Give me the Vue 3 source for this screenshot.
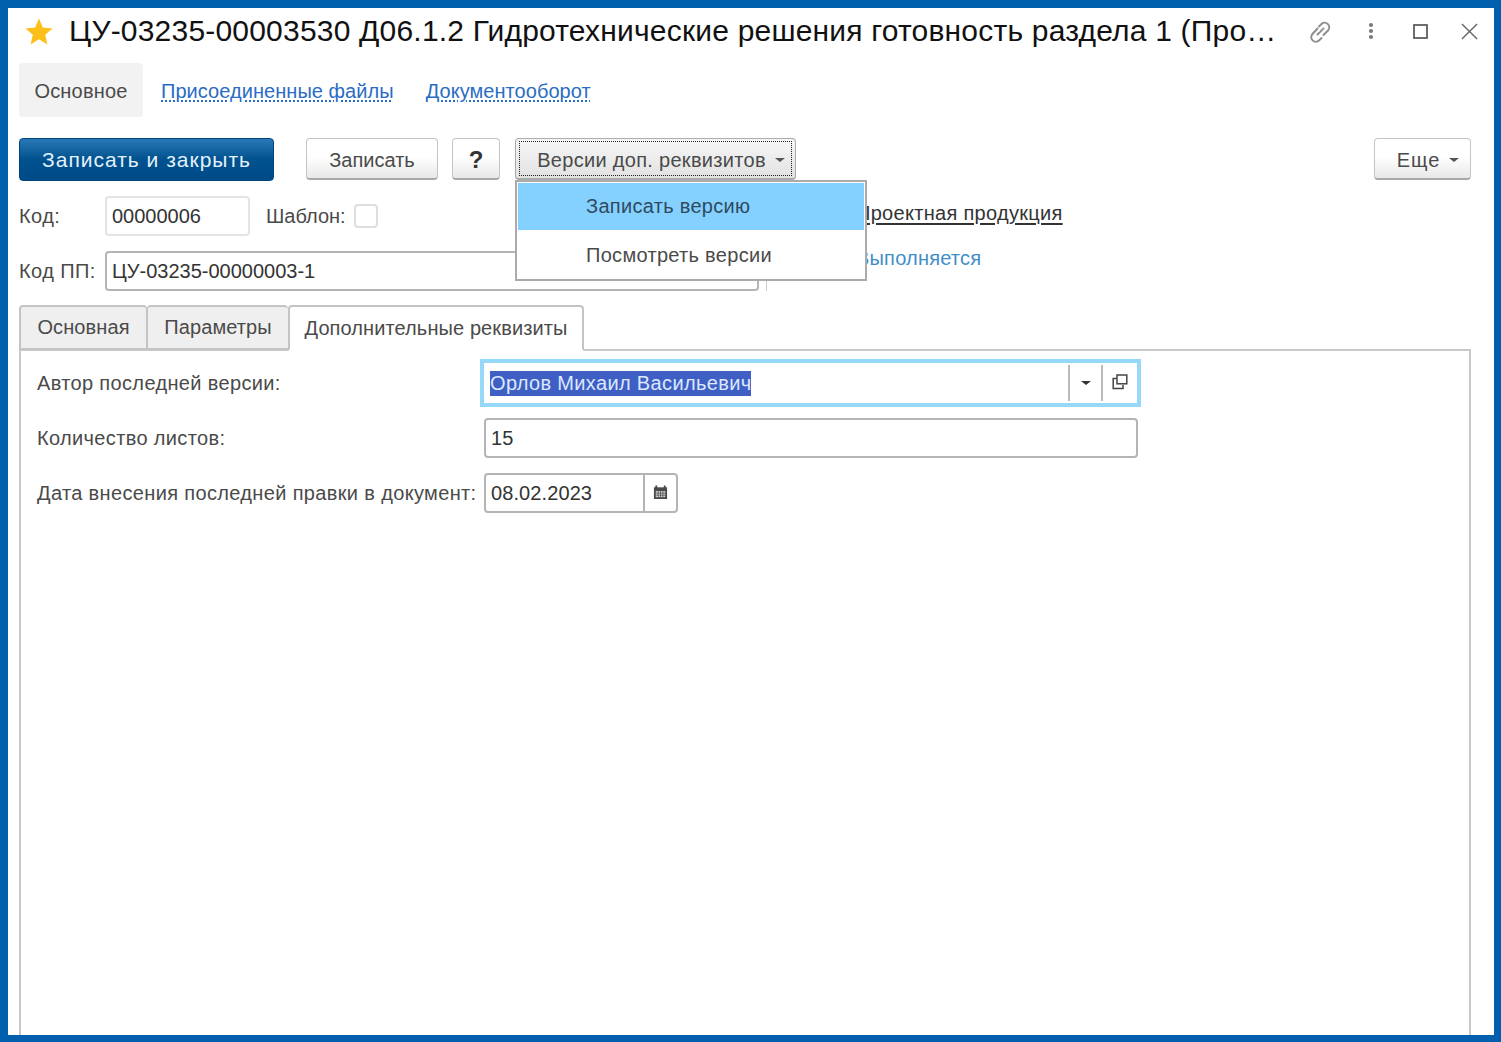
<script setup>
const tabs = [
  { label: 'Основная', cls: 'tab-one' },
  { label: 'Параметры', cls: 'tab-two' },
  { label: 'Дополнительные реквизиты', cls: 'tab-three active' }
]
</script>

<template>
  <div class="frame">
    <div class="window">
      <header class="titlebar">
        <svg class="star" viewBox="0 0 28 27"><path d="M14 0.5l3.9 9.1 9.6.8-7.3 6.4 2.2 9.6L14 21.3l-8.4 5.1 2.2-9.6L.5 10.4l9.6-.8z" fill="#fdbf1c"/></svg>
        <h1 class="title">ЦУ-03235-00003530 Д06.1.2 Гидротехнические решения готовность раздела 1 (Про…</h1>
        <div class="winbtns">
          <svg class="ic-link" viewBox="0 0 25 25" fill="none" stroke="#8e8e8e" stroke-width="2" stroke-linecap="round"><path d="M11 7.5L13.5 5a4.6 4.6 0 0 1 6.5 6.5L15.5 16"/><path d="M9.5 9.5L4.5 15a4.6 4.6 0 0 0 6.5 6.5l2.5-2.5"/><path d="M9.5 15.5l6-6" stroke-dasharray="2.5 1.5"/></svg>
          <svg class="ic-kebab" viewBox="0 0 6 18" fill="#7a7a7a"><circle cx="3" cy="3" r="2.1"/><circle cx="3" cy="9" r="2.1"/><circle cx="3" cy="15" r="2.1"/></svg>
          <svg class="ic-max" viewBox="0 0 15 15" fill="none" stroke="#555" stroke-width="1.7"><rect x="1" y="1" width="13" height="13"/></svg>
          <svg class="ic-close" viewBox="0 0 18 18" fill="none" stroke="#666" stroke-width="1.5"><path d="M1 1l16 16M17 1L1 17"/></svg>
        </div>
      </header>

      <nav class="nav">
        <span class="nav-current">Основное</span>
        <a class="nav-link">Присоединенные файлы</a>
        <a class="nav-link">Документооборот</a>
      </nav>

      <div class="toolbar">
        <button class="btn primary">Записать и закрыть</button>
        <button class="btn save">Записать</button>
        <button class="btn help">?</button>
        <div class="menu-wrap">
          <button class="btn versions">
            <span class="focus-ring">Версии доп. реквизитов<i class="caret"></i></span>
          </button>
          <ul class="popup">
            <li class="popup-item hot">Записать версию</li>
            <li class="popup-item">Посмотреть версии</li>
          </ul>
        </div>
        <button class="btn more">Еще<i class="caret"></i></button>
      </div>

      <div class="row row-code">
        <label class="lbl lbl-code">Код:</label>
        <div class="field field-code">00000006</div>
        <label class="lbl lbl-tpl">Шаблон:</label>
        <span class="check"></span>
        <a class="product">Проектная продукция</a>
      </div>

      <div class="row row-pp">
        <label class="lbl lbl-code">Код ПП:</label>
        <div class="field field-pp">ЦУ-03235-00000003-1</div>
        <span class="tick"></span>
        <a class="status">Выполняется</a>
      </div>

      <div class="tabs">
        <div v-for="t in tabs" :key="t.label" class="tab" :class="t.cls">{{ t.label }}</div>
      </div>

      <section class="panel">
        <div class="p-row p-author">
          <label class="lbl">Автор последней версии:</label>
          <div class="field focused">
            <span class="sel">Орлов Михаил Васильевич</span>
            <span class="f-btn f-drop"><i class="caret dark"></i></span>
            <span class="f-btn f-open">
              <svg viewBox="0 0 16 16" fill="none" stroke="#444" stroke-width="1.5"><path d="M4.5 4.5H1.2v10h9.8v-3.4"/><rect x="5" y="1" width="9.8" height="8.8" fill="#fff"/></svg>
            </span>
          </div>
        </div>
        <div class="p-row p-count">
          <label class="lbl">Количество листов:</label>
          <div class="field field-wide">15</div>
        </div>
        <div class="p-row p-date">
          <label class="lbl">Дата внесения последней правки в документ:</label>
          <div class="field field-date">
            <span class="date-text">08.02.2023</span>
            <span class="f-cal">
              <svg viewBox="0 0 16 16"><path d="M1 3h14v12.5H1z" fill="#4a4a4a"/><path d="M3.5 1v3M12.5 1v3" stroke="#4a4a4a" stroke-width="2"/><path d="M3 7h10v6.5H3z" fill="#d8d8d8"/><path d="M3 9.2h10M3 11.4h10M5.5 7v6.5M8 7v6.5M10.5 7v6.5" stroke="#4a4a4a" stroke-width=".8"/></svg>
            </span>
          </div>
        </div>
      </section>
    </div>
  </div>
</template>

<style>
html, body { margin: 0; padding: 0; }
</style>

<style scoped>
* { box-sizing: border-box; }
.frame {
  width: 1501px;
  height: 1042px;
  padding: 8px 7px 7px 8px;
  background: #0060ae;
  overflow: hidden;
  font-family: "Liberation Sans", Arial, sans-serif;
  font-size: 20px;
  color: #4a4a4a;
}
.window {
  height: 100%;
  background: #fff;
  display: flex;
  flex-direction: column;
  padding: 0 23px 0 11px;
}

.titlebar {
  height: 55px;
  margin-right: -12px;
  padding-bottom: 9px;
  display: flex;
  align-items: center;
  flex: none;
}
.star { width: 28px; height: 27px; margin: 0 0 0 6px; flex: none; }
.title {
  margin: 0 0 0 16px;
  font-size: 30px;
  font-weight: 400;
  letter-spacing: .2px;
  color: #111;
  white-space: nowrap;
  width: 1210px;
  flex: none;
  overflow: hidden;
}
.winbtns { display: flex; align-items: center; margin-left: 29px; flex: none; }
.ic-link { width: 25px; height: 25px; }
.ic-kebab { width: 6px; height: 18px; margin-left: 35px; }
.ic-max { width: 15px; height: 15px; margin-left: 39px; }
.ic-close { width: 17px; height: 17px; margin-left: 33px; }

.nav { display: flex; align-items: center; height: 54px; flex: none; }
.nav-current {
  width: 124px;
  height: 54px;
  padding-top: 2px;
  letter-spacing: .2px;
  background: #f2f2f2;
  border-radius: 4px;
  display: flex;
  align-items: center;
  justify-content: center;
}
.nav-link {
  color: #2b6cc4;
  margin: 2px 0 0 18px;
  letter-spacing: .05px;
  text-decoration: underline dotted;
  text-underline-offset: 3px;
}
.nav-link + .nav-link { margin-left: 32px; }

.toolbar { display: flex; align-items: flex-start; margin-top: 21px; height: 43px; flex: none; }
.btn {
  font: inherit;
  height: 42px;
  padding: 3px 0 0;
  color: #4a4a4a;
  border: 1px solid #c4c4c4;
  border-bottom: 2px solid #a8a8a8;
  border-radius: 4px;
  background: linear-gradient(#fff 45%, #e8e8e8);
}
.primary {
  width: 255px;
  height: 43px;
  padding-top: 1px;
  color: #e4f1fb;
  font-size: 21px;
  letter-spacing: 1px;
  border: 1px solid #00447e;
  background: linear-gradient(#2a78b6, #00528f 50%, #004a88);
}
.save { width: 132px; margin-left: 32px; }
.help { width: 48px; margin-left: 14px; color: #333; font-size: 24px; font-weight: 700; }
.menu-wrap { position: relative; margin-left: 15px; }
.versions { width: 281px; background: linear-gradient(#f6f6f6, #e2e2e2); padding: 2px 3px; border-width: 1px 1px 2px; border-color: #aaa; }
.focus-ring {
  display: flex;
  align-items: center;
  justify-content: center;
  height: 100%;
  padding: 3px 0 0 11px;
  border: 1px dotted #222;
  letter-spacing: .3px;
}
.caret {
  display: inline-block;
  width: 0;
  height: 0;
  margin-left: 9px;
  border-left: 5px solid transparent;
  border-right: 5px solid transparent;
  border-top: 4px solid #555;
}
.caret.dark { margin: 0; border-top-color: #333; }
.popup {
  position: absolute;
  left: 0;
  top: 42px;
  width: 352px;
  height: 101px;
  margin: 0;
  padding: 1px;
  list-style: none;
  background: #fff;
  border: 2px solid #ababab;
  z-index: 5;
  letter-spacing: .3px;
}
.popup-item { height: 50px; padding-left: 68px; display: flex; align-items: center; }
.hot { height: 47px; background: #84d1ff; color: #2f4a5f; }
.more {
  width: 97px;
  margin-left: auto;
  padding-left: 11px;
  letter-spacing: 1px;
  display: flex;
  align-items: center;
  justify-content: center;
}

.row { display: flex; align-items: center; height: 40px; flex: none; }
.row-code { margin-top: 15px; }
.row-pp { margin-top: 15px; }
.lbl { white-space: nowrap; }
.lbl-code { width: 86px; letter-spacing: .4px; }
.field {
  height: 40px;
  border: 2px solid #b4b4b4;
  border-radius: 4px;
  padding-left: 5px;
  display: flex;
  align-items: center;
  color: #333;
  background: #fff;
}
.field-code { width: 145px; border-color: #e4e4e4; }
.lbl-tpl { margin-left: 16px; width: 78px; }
.check {
  width: 24px;
  height: 24px;
  margin-left: 10px;
  border: 2px solid #dedede;
  border-radius: 4px;
}
.product {
  margin-left: 478px;
  margin-top: -6px;
  color: #333;
  letter-spacing: .3px;
  text-decoration: underline;
  text-underline-offset: 3px;
}
.field-pp { width: 654px; }
.tick { width: 1px; height: 10px; background: #ccc; align-self: flex-end; margin-left: 7px; }
.status { margin-left: 89px; align-self: flex-start; margin-top: -4px; color: #3f8fc8; letter-spacing: .2px; }

.tabs { display: flex; height: 45px; margin-top: 14px; flex: none; position: relative; z-index: 1; letter-spacing: .1px; }
.tab {
  height: 45px;
  display: flex;
  align-items: center;
  justify-content: center;
  background: #efefef;
  border: 2px solid #c4c4c4;
  border-radius: 4px 4px 0 0;
}
.tab-one { width: 128px; border-right-width: 1px; }
.tab-two { width: 141px; border-left-width: 1px; border-right-width: 0; }
.tab-three { width: 296px; }
.active { background: #fff; border-bottom-color: #fff; height: 46px; }

.panel {
  flex: 1;
  margin: -1px 0 0 0;
  width: 1452px;
  border: 2px solid #c8c8c8;
  border-bottom: 0;
  padding-top: 8px;
  min-height: 0;
}
.p-row {
  display: grid;
  grid-template-columns: 447px auto;
  justify-content: start;
  align-items: center;
  padding-left: 16px;
  letter-spacing: .35px;
}
.p-author { height: 48px; }
.p-count { height: 40px; margin-top: 11px; }
.p-date { height: 40px; margin-top: 15px; }
.p-row .field { letter-spacing: .1px; }
.focused {
  width: 653px;
  height: 40px;
  outline: 4px solid #96d8fa;
  outline-offset: 0;
  border: 0;
  border-radius: 0;
  padding-left: 6px;
}
.p-row .sel {
  width: 261px;
  height: 25px;
  line-height: 25px;
  background: #3f5fc4;
  color: #dbe8ff;
  white-space: nowrap;
  letter-spacing: .35px;
}
.f-btn { height: 36px; display: flex; align-items: center; justify-content: center; border-left: 2px solid #bcbcbc; }
.f-drop { width: 33px; margin-left: auto; }
.f-open { width: 36px; }
.f-open svg { width: 16px; height: 16px; margin-top: -3px; }
.field-wide { width: 654px; }
.field-date { width: 194px; padding-right: 0; }
.date-text { width: 152px; flex: none; }
.f-cal {
  width: 33px;
  flex: none;
  height: 36px;
  border-left: 2px solid #b4b4b4;
  display: flex;
  align-items: center;
  justify-content: center;
}
.f-cal svg { width: 15px; height: 16px; margin-top: -3px; }
</style>
